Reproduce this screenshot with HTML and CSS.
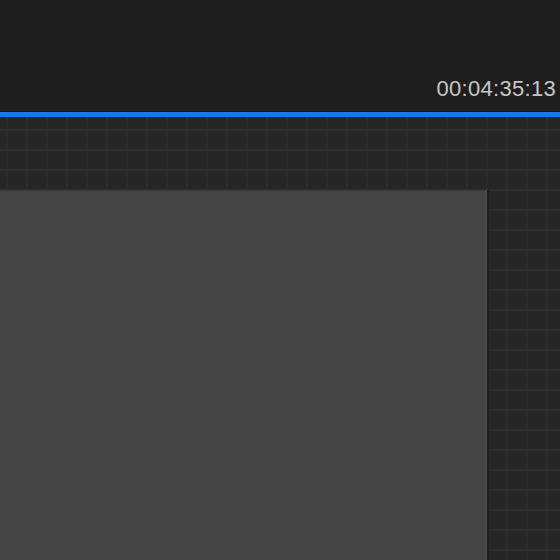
FILE: index.html
```html
<!DOCTYPE html>
<html lang="en">
<head>
    <meta charset="UTF-8">
    <meta name="viewport" content="width=device-width, initial-scale=1.0">
    <title>Timeline</title>
    <link rel="stylesheet" href="styles.css">
</head>
<body>
    <div class="top-bar">
        <span class="timecode">00:04:35:13</span>
    </div>
    <div class="progress-bar"></div>
    <div class="timeline">
        <div class="ruler"></div>
        <div class="track-row">
            <div class="viewer"></div>
            <div class="track-rest"></div>
        </div>
    </div>
</body>
</html>
```

FILE: styles.css
```css
body {
    font-family: "Liberation Sans", Arial, sans-serif;
    margin: 0;
    padding: 0;
    width: 560px;
    height: 560px;
    overflow: hidden;
    background-color: #1e1e1e;
    display: flex;
    flex-direction: column;
}
.top-bar {
    height: 112px;
    background-color: #1e1e1e;
    display: flex;
    justify-content: flex-end;
    align-items: flex-end;
    padding-right: 4px;
    box-sizing: border-box;
    border-bottom: 1px solid #141414;
}
.timecode {
    font-size: 22px;
    color: #c6c6c6;
    line-height: 22px;
    margin-bottom: 11px;
    letter-spacing: 0.3px;
}
.progress-bar {
    height: 5px;
    background-color: #1878f2;
}
.timeline {
    flex: 1;
    display: flex;
    flex-direction: column;
    background-color: #262626;
    background-image:
        linear-gradient(to bottom, #2f2f2f 2px, transparent 2px),
        linear-gradient(to right, #2b2b2b 2px, transparent 2px);
    background-size: 20px 20px, 20px 20px;
    background-position: 0 12px, 6px 0;
}
.ruler {
    height: 73px;
}
.track-row {
    flex: 1;
    display: flex;
}
.viewer {
    width: 485px;
    background-color: #444444;
    border-right: 2px solid #4c4c4c;
    box-shadow: 2px 0 0 #1f1f1f;
    border-top: 1px solid #3a3a3a;
}
.track-rest {
    flex: 1;
}
```
